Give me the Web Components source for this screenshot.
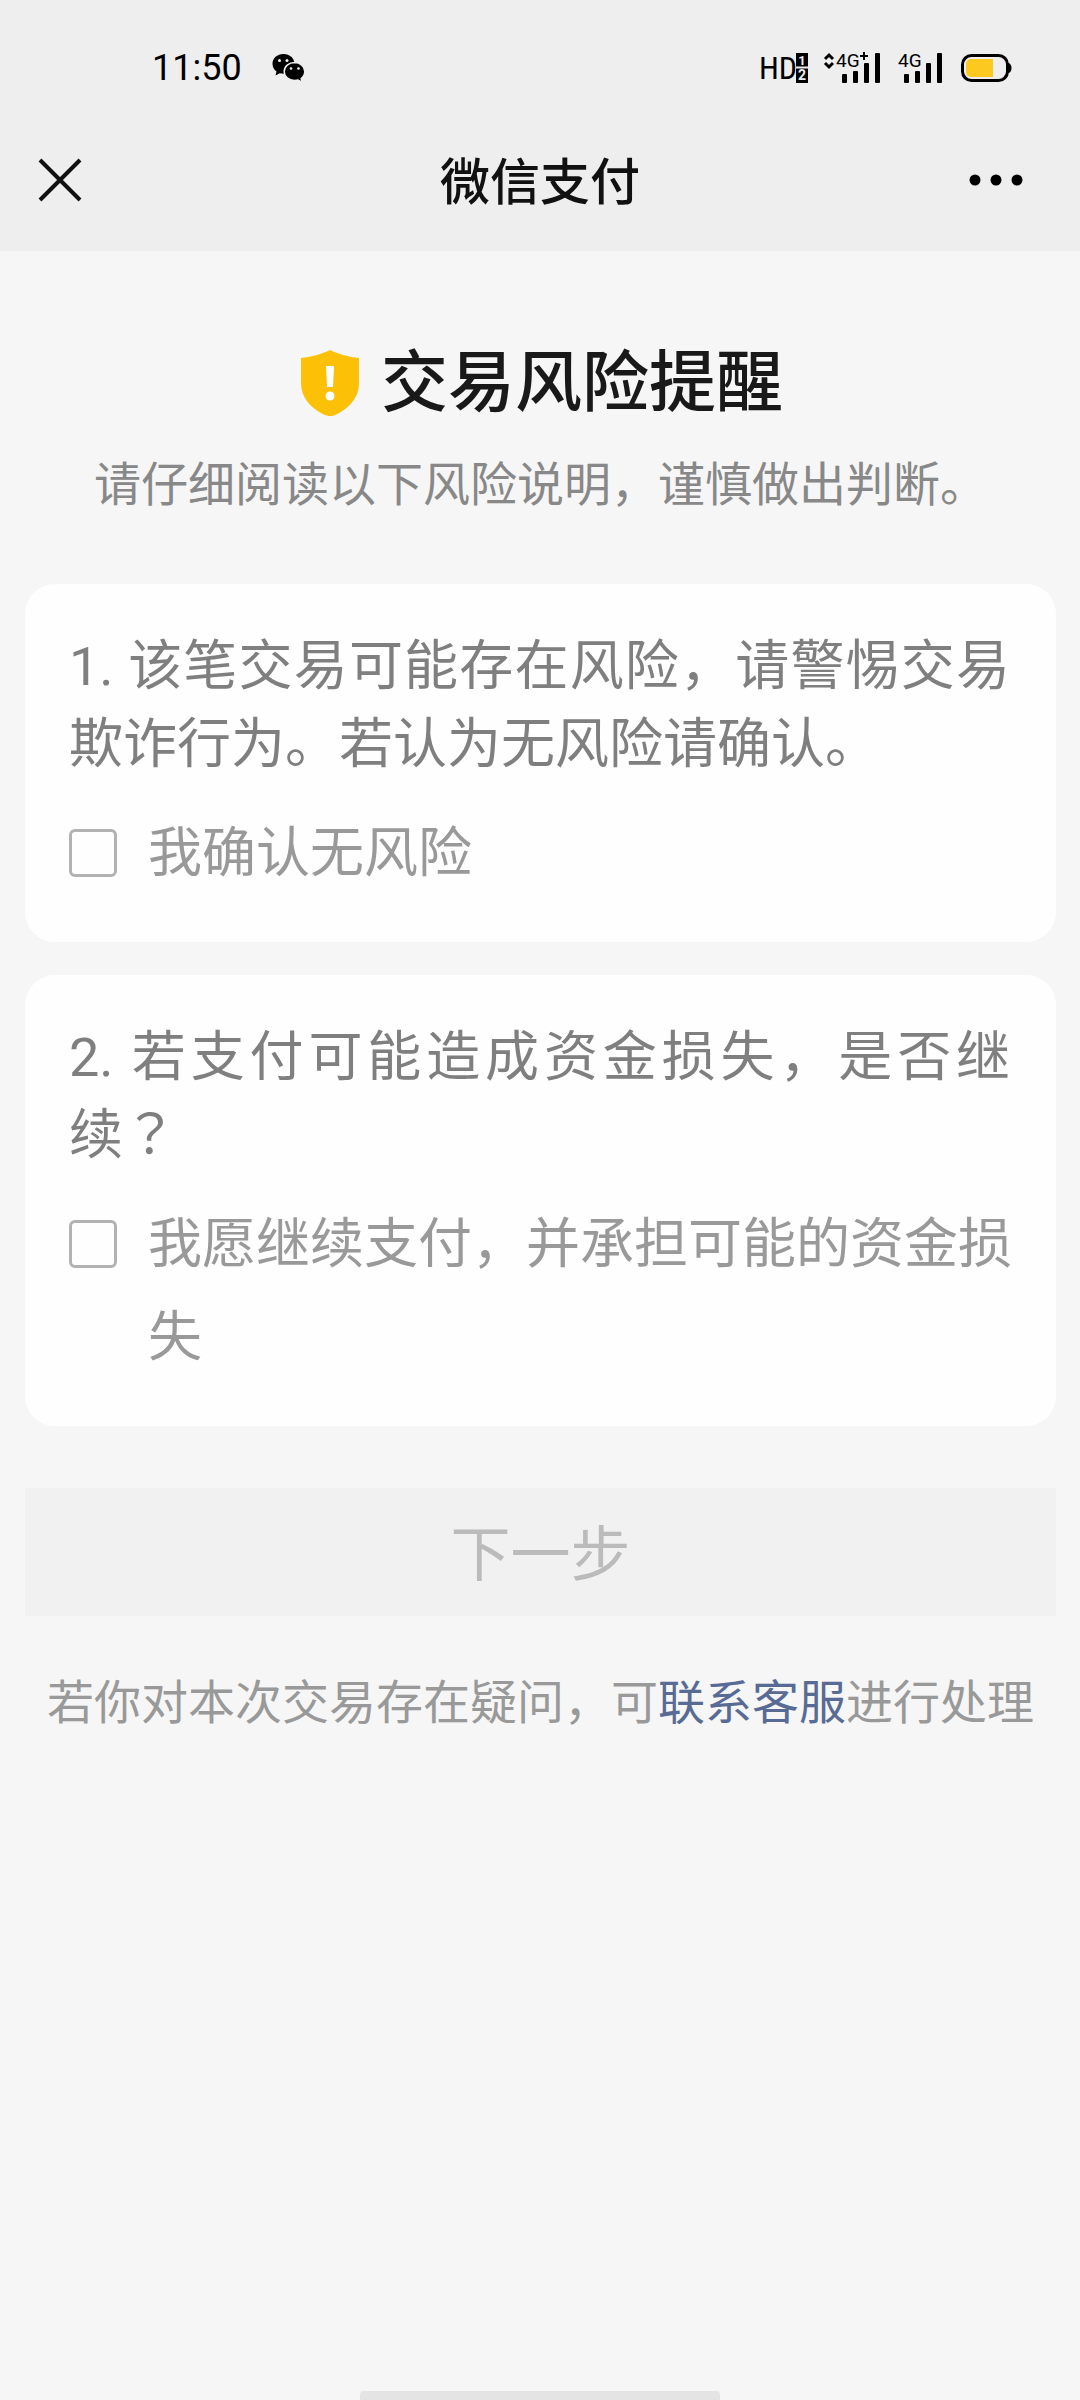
<!DOCTYPE html>
<html lang="zh-CN">
<head>
<meta charset="utf-8">
<meta name="viewport" content="width=device-width, initial-scale=1">
<title>微信支付</title>
<style>
    body {
        margin: 0;
        background-color: #f6f6f6;
        font-family: Roboto, "Noto Sans CJK SC", sans-serif;
    }

    /* centred full-width question mark */
    .mark {
        font-family: Roboto, "Noto Sans CJK TC", sans-serif;
    }
</style>
</head>
<body>
<risk-page>
    <status-bar slot="top" time="11:50"></status-bar>
    <nav-bar slot="top">微信支付</nav-bar>

    <risk-header>
        交易风险提醒
        <span slot="subtitle">请仔细阅读以下风险说明，谨慎做出判断。</span>
    </risk-header>

    <risk-card>
        1. 该笔交易可能存在风险，请警惕交易欺诈行为。若认为无风险请确认。
        <span slot="label">我确认无风险</span>
    </risk-card>
    <risk-card>
        2. 若支付可能造成资金损失，是否继续<span class="mark" lang="zh-TW">？</span>
        <span slot="label">我愿继续支付，并承担可能的资金损失</span>
    </risk-card>

    <next-button>下一步</next-button>
    <service-hint></service-hint>
</risk-page>

<script>
class RiskPage extends HTMLElement {
    constructor() {
        super();
        this.attachShadow({mode: 'open'});
        this.shadowRoot.innerHTML = `
            <style>
                :host {
                    display: flex;
                    flex-direction: column;
                    min-height: 100vh;
                }

                header {
                    background-color: #eee;
                    padding-bottom: 25px;
                }

                main {
                    flex: 1;
                    display: flex;
                    flex-direction: column;
                    gap: 33px;
                    padding: 84px 24px 0 25px;
                }

                .home {
                    align-self: center;
                    width: 33.3333%;
                    height: 9px;
                    background-color: #e4e4e4;
                    border-radius: 4px 4px 0 0;
                }
            </style>
            <header><slot name="top"></slot></header>
            <main><slot></slot></main>
            <div class="home"></div>
        `;
    }
}

class StatusBar extends HTMLElement {
    constructor() {
        super();
        this.attachShadow({mode: 'open'});
        this.shadowRoot.innerHTML = `
            <style>
                :host {
                    display: flex;
                    align-items: center;
                    height: 136px;
                    padding: 0 68px 0 152px;
                    color: #000;
                }

                time {
                    font-size: 36px;
                    line-height: 40px;
                }

                .wechat {
                    margin-left: 30px;
                }

                .right {
                    display: flex;
                    align-items: center;
                    margin-left: auto;
                    gap: 14px;
                }

                svg {
                    display: block;
                }

                text {
                    font-family: Roboto, sans-serif;
                }

                .hd {
                    font-family: "Roboto Condensed", "Liberation Sans Narrow", Roboto, sans-serif;
                }
            </style>
            <time>${this.getAttribute('time')}</time>
            <svg class="wechat" width="33" height="30" viewBox="0 0 33 30">
                <path d="M11.5 1C5.2 1 .5 5.300.5 10.800c0 3.200 1.600 5.900 4 7.700L3.500 22.500l4.200-2.300c1.200.3 2.500.5 3.800.5 6.200 0 11-4.400 11-9.900S17.700 1 11.500 1z"/>
                <path d="M22.500 9.500c-5.700 0-10.300 4-10.300 9s4.600 9 10.300 9c1.300 0 2.500-.2 3.600-.5l4 2.500-.9-4c2.200-1.700 3.600-4.200 3.600-7 0-5-4.600-9-10.300-9z" stroke="#eee" stroke-width="1.500"/>
                <g fill="#eee">
                    <circle cx="7.500" cy="7.500" r="1.500"/><circle cx="15" cy="7.500" r="1.500"/>
                    <circle cx="19" cy="15.500" r="1.300"/><circle cx="26.500" cy="15.500" r="1.300"/>
                </g>
            </svg>
            <div class="right">
                <svg width="52" height="48" viewBox="-2 -8 52 48">
                    <text class="hd" x="0" y="27" font-size="32">HD</text>
                    <rect x="37" y="1" width="12" height="30"/>
                    <path d="M37 15.500h12" stroke="#eee" stroke-width="2"/>
                    <text x="43" y="13" font-size="13" font-weight="700" fill="#eee" text-anchor="middle">1</text>
                    <text x="43" y="28" font-size="14" font-weight="700" fill="#eee" text-anchor="middle">2</text>
                </svg>
                <svg width="59" height="48" viewBox="-1 -8 59 48">
                    <path d="M1 7l4-4 4 4M1 11l4 4 4-4" fill="none" stroke="#000" stroke-width="3"/>
                    <text x="12" y="15" font-size="19">4G</text>
                    <path d="M36 4h8M40 0v8" stroke="#000" stroke-width="2"/>
                    <rect x="18" y="22" width="5" height="9" rx="1"/>
                    <rect x="29" y="19" width="5" height="12" rx="1"/>
                    <rect x="40" y="11" width="5" height="20" rx="1"/>
                    <rect x="51" y="1" width="5" height="30" rx="1"/>
                </svg>
                <svg width="50" height="48" viewBox="-2 -8 50 48">
                    <text x="0" y="15" font-size="19">4G</text>
                    <rect x="6" y="22" width="5" height="9" rx="1"/>
                    <rect x="17" y="19" width="5" height="12" rx="1"/>
                    <rect x="28" y="11" width="5" height="20" rx="1"/>
                    <rect x="39" y="1" width="5" height="30" rx="1"/>
                </svg>
                <svg width="52" height="48" viewBox="0 -8 52 48">
                    <rect x="2.500" y="3.500" width="45" height="25" rx="9" fill="none" stroke="#000" stroke-width="3"/>
                    <path d="M48 11c2 0 3.500 2 3.500 5s-1.500 5-3.500 5z"/>
                    <rect x="6" y="7" width="27" height="18" rx="5" fill="#fbc920"/>
                    <path d="M20 7h13v18H20z" fill="#fbc920"/>
                </svg>
            </div>
        `;
    }
}

class NavBar extends HTMLElement {
    constructor() {
        super();
        this.attachShadow({mode: 'open'});
        this.shadowRoot.innerHTML = `
            <style>
                :host {
                    display: grid;
                    grid-template-columns: 1fr auto 1fr;
                    align-items: center;
                    height: 90px;
                    padding: 0 37px;
                    color: #111;
                }

                h1 {
                    margin: 0;
                    padding-top: 4px;
                    font-size: 50px;
                    font-weight: 500;
                    line-height: 72px;
                }

                button {
                    padding: 0;
                    border: 0;
                    background: none;
                    color: inherit;
                    justify-self: start;
                }

                button:last-child {
                    justify-self: end;
                }

                svg {
                    display: block;
                }
            </style>
            <button aria-label="关闭">
                <svg width="46" height="46" viewBox="0 0 46 46">
                    <path d="M3 2l40 40M43 2L3 42" stroke="currentColor" stroke-width="4"/>
                </svg>
            </button>
            <h1><slot></slot></h1>
            <button aria-label="更多">
                <svg width="75" height="46" viewBox="0 0 75 46">
                    <circle cx="7" cy="22" r="5.500"/><circle cx="28" cy="22" r="5.500"/><circle cx="49" cy="22" r="5.500"/>
                </svg>
            </button>
        `;
    }
}

class RiskHeader extends HTMLElement {
    constructor() {
        super();
        this.attachShadow({mode: 'open'});
        this.shadowRoot.innerHTML = `
            <style>
                :host {
                    display: block;
                    text-align: center;
                    margin-bottom: 33px;
                }

                .title {
                    display: flex;
                    align-items: center;
                    justify-content: center;
                    gap: 22px;
                    padding-left: 3px;
                }

                h2 {
                    margin: 0;
                    color: #191919;
                    font-size: 67px;
                    font-weight: 500;
                    line-height: 96px;
                }

                p {
                    margin: 21px 0 0;
                    color: #888;
                    font-size: 47px;
                    line-height: 66px;
                }
            </style>
            <div class="title">
                <svg width="58" height="66" viewBox="0 0 58 66" aria-hidden="true">
                    <path d="M29 0C37 4 48 7 58 8v25c0 14-9 24-20 30-5 3-7 3-9 3s-4 0-9-3C9 57 0 47 0 33V8C10 7 21 4 29 0z" fill="#fcc006"/>
                    <path d="M25 16h8l-1 21h-6z" fill="#fff"/>
                    <circle cx="29" cy="46" r="4.500" fill="#fff"/>
                </svg>
                <h2><slot></slot></h2>
            </div>
            <p><slot name="subtitle"></slot></p>
        `;
    }
}

class RiskCard extends HTMLElement {
    constructor() {
        super();
        this.attachShadow({mode: 'open'});
        this.shadowRoot.innerHTML = `
            <style>
                :host {
                    display: block;
                    padding: 44px 32px 42px 44px;
                    background-color: #fefefe;
                    border-radius: 30px;
                    font-size: 54px;
                }

                p {
                    margin: 0 14px 23px 0;
                    color: #7f7f7f;
                    line-height: 78px;
                    text-align: justify;
                }

                label {
                    display: flex;
                    gap: 31px;
                    color: #999;
                    line-height: 93px;
                }

                input {
                    appearance: none;
                    flex: none;
                    box-sizing: border-box;
                    width: 48px;
                    height: 48px;
                    margin: 22px 0 0;
                    border: 3px solid #b2b2b2;
                    border-radius: 6px;
                    background-color: #fefefe;
                }

                input:checked {
                    background-color: #07c160;
                    border-color: #07c160;
                }
            </style>
            <p><slot></slot></p>
            <label>
                <input type="checkbox">
                <slot name="label"></slot>
            </label>
        `;
    }
}

class NextButton extends HTMLElement {
    constructor() {
        super();
        this.attachShadow({mode: 'open'});
        this.shadowRoot.innerHTML = `
            <style>
                :host {
                    display: block;
                    margin-top: 29px;
                }

                button {
                    display: block;
                    width: 100%;
                    height: 128px;
                    padding: 0 0 6px;
                    border: 0;
                    background-color: #f1f1f1;
                    color: #bbb;
                    font-family: inherit;
                    font-size: 60px;
                    font-weight: 400;
                }
            </style>
            <button disabled><slot></slot></button>
        `;
    }

    // enabled once every card on the page is ticked
    connectedCallback() {
        const button = this.shadowRoot.querySelector('button');
        const cards = () => [...this.parentElement.querySelectorAll('risk-card')];

        this.parentElement.addEventListener('click', () => {
            button.disabled = !cards().every(card => card.shadowRoot.querySelector('input').checked);
        });
    }
}

class ServiceHint extends HTMLElement {
    constructor() {
        super();
        this.attachShadow({mode: 'open'});
        this.shadowRoot.innerHTML = `
            <style>
                :host {
                    display: block;
                    margin-top: 21px;
                    color: #999;
                    font-size: 47px;
                    line-height: 66px;
                    text-align: center;
                }

                a {
                    color: #576b95;
                    text-decoration: none;
                }
            </style>
            若你对本次交易存在疑问，可<a href="#service">联系客服</a>进行处理
        `;
    }
}

customElements.define('risk-page', RiskPage);
customElements.define('status-bar', StatusBar);
customElements.define('nav-bar', NavBar);
customElements.define('risk-header', RiskHeader);
customElements.define('risk-card', RiskCard);
customElements.define('next-button', NextButton);
customElements.define('service-hint', ServiceHint);
</script>
</body>
</html>
